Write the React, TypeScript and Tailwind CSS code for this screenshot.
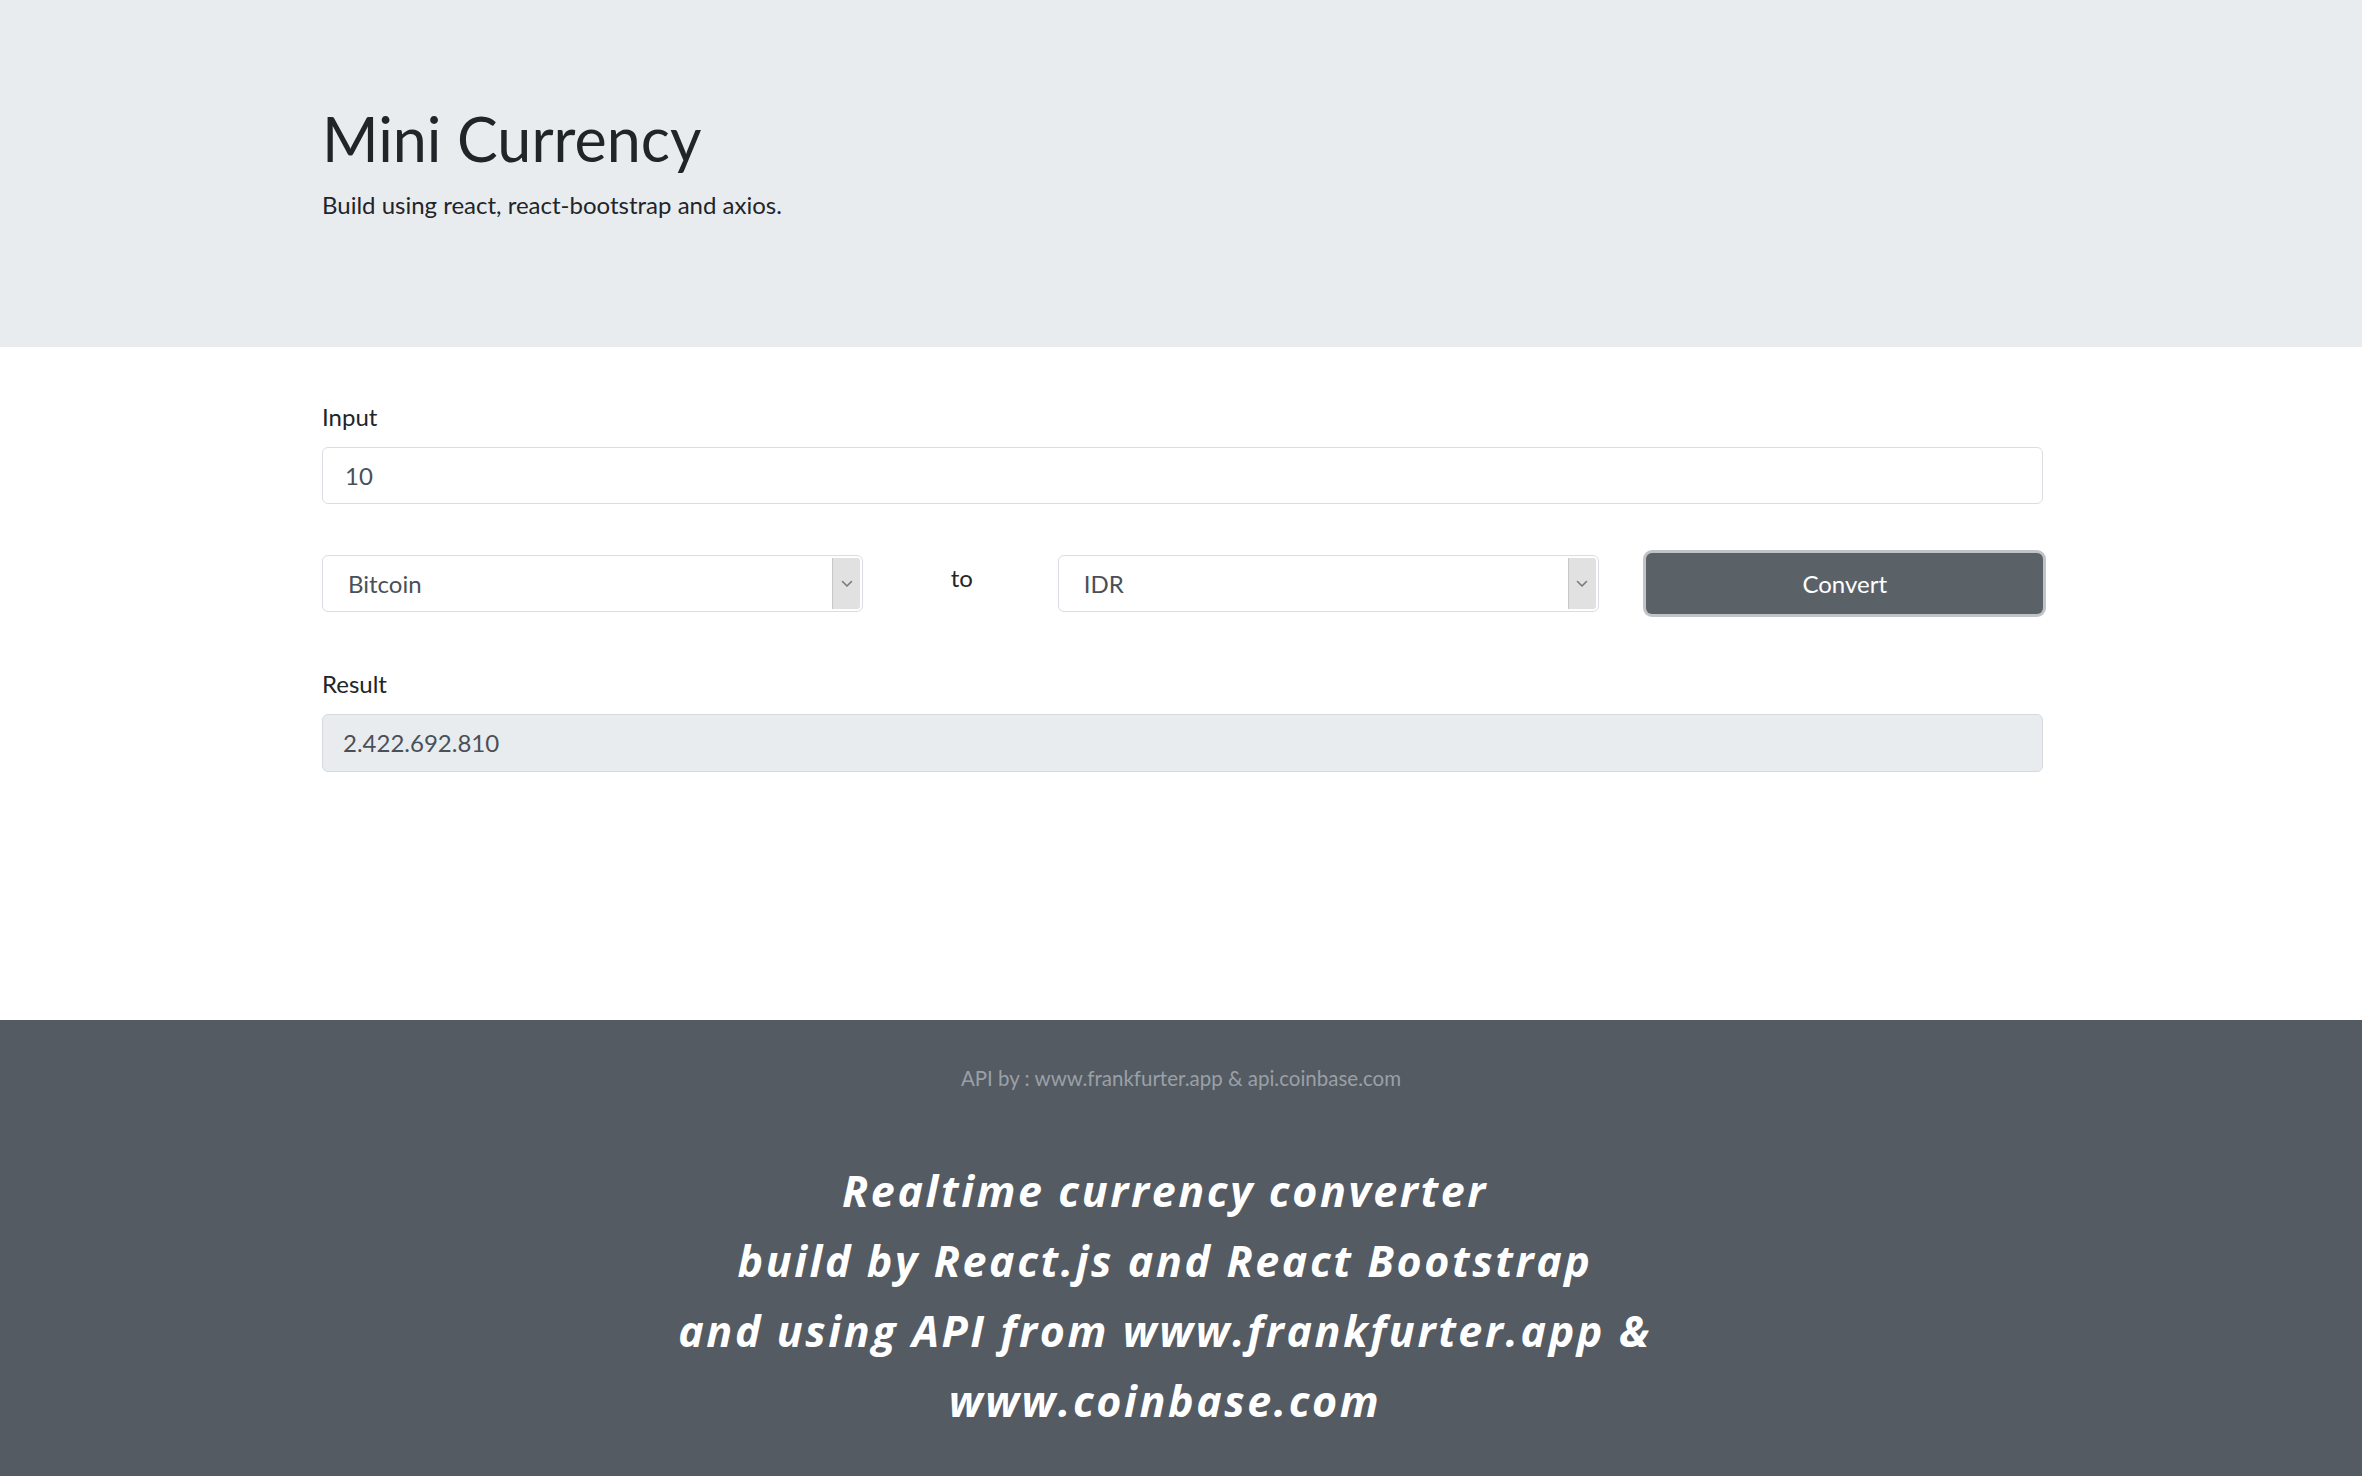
import React from 'react';

const body = "font-['Lato','Liberation_Sans',sans-serif]";

function Chevron() {
  return (
    <svg width="12" height="8" viewBox="0 0 12 8" fill="none">
      <path d="M1.5 1.5 L6 6 L10.5 1.5" stroke="#7a7a7a" strokeWidth="1.6" strokeLinecap="round" strokeLinejoin="round" />
    </svg>
  );
}

function SelectBox({ value }: { value: string }) {
  return (
    <div className="flex h-[57px] w-[541px] items-stretch rounded-[6px] border border-[#dadee3] bg-white">
      <div className="flex flex-1 items-center pl-[25px] text-[24px] text-[#495057]">{value}</div>
      <div className="my-[2px] mr-[2px] flex w-[28px] items-center justify-center rounded-r-[3px] border-l border-[#c8c8c8] bg-[#e1e1e1]">
        <Chevron />
      </div>
    </div>
  );
}

export default function App() {
  return (
    <div className={`flex min-h-screen flex-col ${body}`}>
      {/* jumbotron */}
      <header className="h-[347px] bg-[#e9ecef]">
        <div className="ml-[322px] w-[1721px] pt-[102px]">
          <h1 className="text-[61px] font-normal leading-[1.2] text-[#212529]">Mini Currency</h1>
          <p className="mt-[12px] text-[24px] leading-[1.5] text-[#212529]">
            Build using react, react-bootstrap and axios.
          </p>
        </div>
      </header>

      <main className="h-[673px] bg-white">
        <div className="ml-[322px] w-[1721px] pt-[52px]">
          <label className="mb-[12px] block text-[24px] leading-[1.5] text-[#212529]">Input</label>
          <div className="flex h-[57px] items-center rounded-[6px] border border-[#dadee3] bg-white pl-[22px] text-[24px] text-[#495057]">
            10
          </div>

          <div className="mt-[49px] grid grid-cols-12 items-center gap-x-[45px]">
            <div className="col-span-4">
              <SelectBox value="Bitcoin" />
            </div>
            <div className="col-span-1 flex justify-center self-start pt-[7px] text-[24px] leading-[1.5] text-[#212529]">
              to
            </div>
            <div className="col-span-4">
              <SelectBox value="IDR" />
            </div>
            <div className="col-span-3">
              <button className="flex h-[61px] w-full items-center justify-center rounded-[6px] bg-[#5a6268] text-[24px] text-white shadow-[0_0_0_3px_rgba(130,138,145,0.5)]">
                Convert
              </button>
            </div>
          </div>

          <label className="mb-[12px] mt-[52px] block text-[24px] leading-[1.5] text-[#212529]">Result</label>
          <div className="flex h-[58px] items-center rounded-[6px] border border-[#d6dadf] bg-[#e9ecef] pl-[20px] text-[24px] text-[#495057]">
            2.422.692.810
          </div>
        </div>
      </main>

      <footer className="flex flex-1 flex-col items-center bg-[#545b63] pt-[43px] text-center">
        <p className="text-[20.5px] leading-[1.5] text-[#9aa0a7]">API by : www.frankfurter.app &amp; api.coinbase.com</p>
        <div className="mr-[32px] mt-[62px] font-['Open_Sans',sans-serif] text-[43px] font-bold italic leading-[70px] tracking-[2.6px] text-white">
          <p>Realtime currency converter</p>
          <p>build by React.js and React Bootstrap</p>
          <p>and using API from www.frankfurter.app &amp;</p>
          <p>www.coinbase.com</p>
        </div>
      </footer>
    </div>
  );
}
